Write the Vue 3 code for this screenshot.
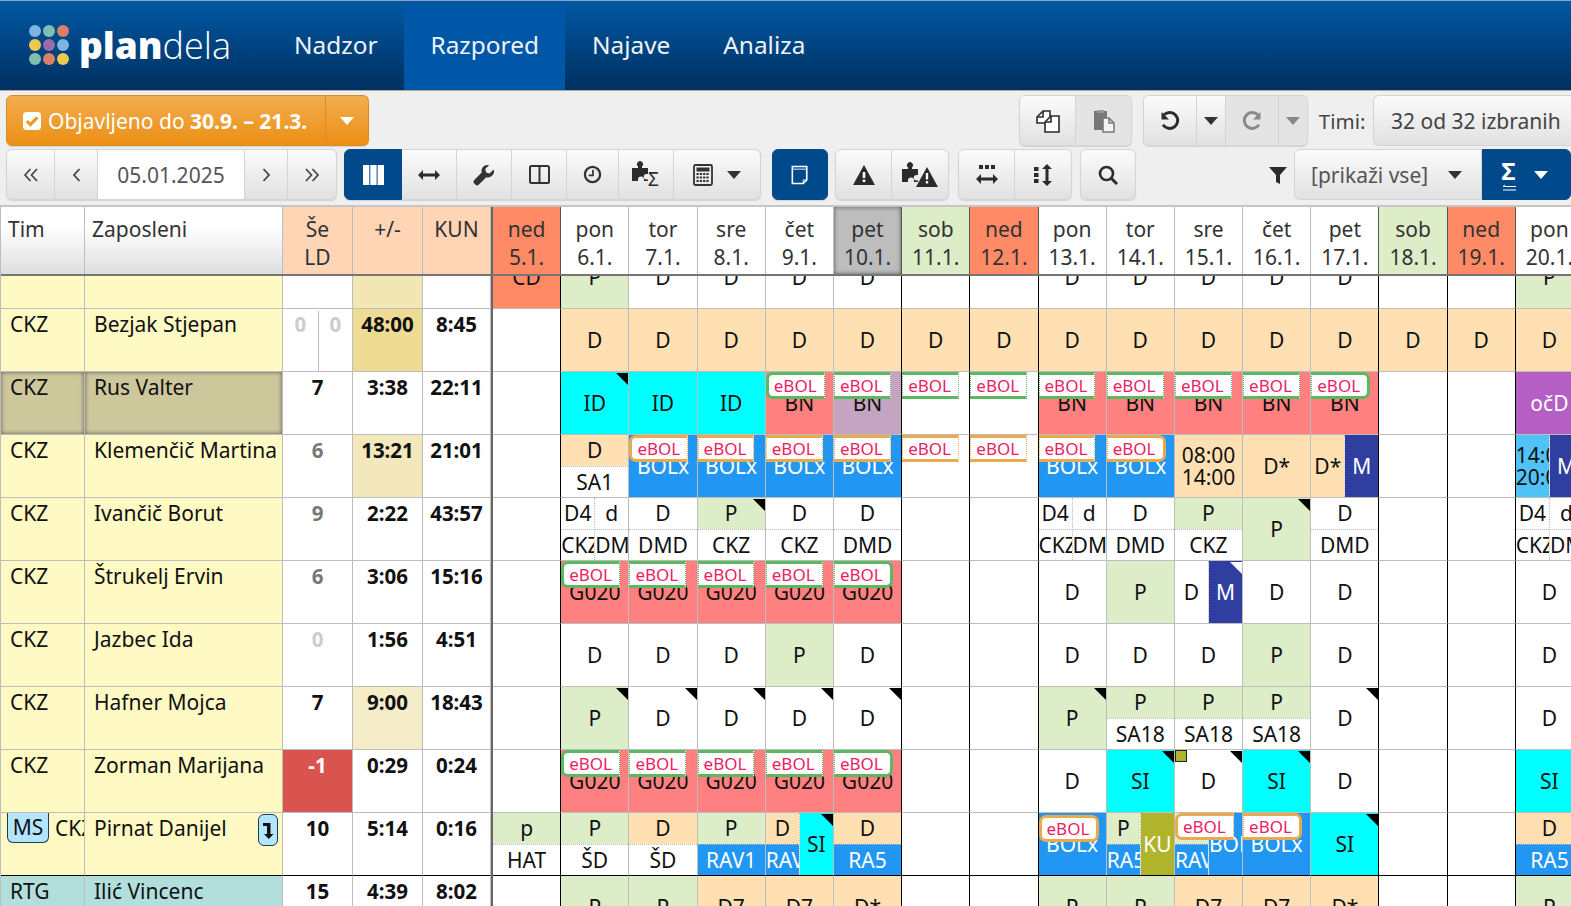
<template>
  <div class="app">
    <header class="topbar">
      <div class="logo">
        <svg width="42" height="42" viewBox="0 0 42 42">
          <circle v-for="d in logoDots" :key="d.x + '-' + d.y" :cx="d.x" :cy="d.y" r="6" :fill="d.c" />
        </svg>
        <span class="logo-text"><b>plan</b><i>dela</i></span>
      </div>
      <nav class="nav">
        <a v-for="n in navItems" :key="n" class="nav-item" :class="{ active: n === 'Razpored' }">{{ n }}</a>
      </nav>
    </header>

    <section class="toolbar">
      <div class="tb-row">
        <div class="btn-group">
          <button class="btn orange publish">
            <svg class="check" width="20" height="20" viewBox="0 0 20 20">
              <rect x="1" y="1" width="18" height="18" rx="3.5" fill="#fff" />
              <path d="M4.8 10.2l3.6 3.4 7-7.2" fill="none" stroke="#ec961f" stroke-width="3" />
            </svg>
            Objavljeno do&nbsp;<b>30.9. – 21.3.</b>
          </button>
          <button class="btn orange publish-caret"><span class="caret white"></span></button>
        </div>
        <div class="spacer"></div>
        <div class="btn-group">
          <button class="btn w57">
            <svg width="24" height="24" viewBox="0 0 24 24" fill="#fff" stroke="#2b2b2b" stroke-width="1.6">
              <path d="M1 8l6-6h7v12H1z" />
              <path d="M1 8h6V2" fill="none" />
              <path d="M15 7h8v16H9V13z" />
              <path d="M9 13h6V7" fill="none" />
            </svg>
          </button>
          <button class="btn w56 off">
            <svg width="24" height="24" viewBox="0 0 24 24">
              <rect x="2" y="2" width="13" height="19" fill="#777" />
              <rect x="5" y="1" width="7" height="3" fill="#999" />
              <path d="M11 9h6l5 5v9H11z" fill="#f4f4f4" stroke="#777" stroke-width="1.5" />
              <path d="M17 9v5h5" fill="none" stroke="#777" stroke-width="1.5" />
            </svg>
          </button>
        </div>
        <div class="btn-group ml11">
          <button class="btn w54">
            <svg width="22" height="22" viewBox="0 0 22 22" fill="none" stroke="#2b2b2b" stroke-width="3">
              <path d="M5 4.8a8 8 0 1 1-1 10" />
              <path d="M2.5 2v7.5H10" fill="#2b2b2b" stroke="none" />
            </svg>
          </button>
          <button class="btn w29"><span class="caret"></span></button>
          <button class="btn w53 off">
            <svg width="22" height="22" viewBox="0 0 22 22" fill="none" stroke="#888" stroke-width="3">
              <path d="M17 4.8a8 8 0 1 0 1 10" />
              <path d="M19.5 2v7.5H12" fill="#888" stroke="none" />
            </svg>
          </button>
          <button class="btn w29 off"><span class="caret grey"></span></button>
        </div>
        <span class="tb-label">Timi:</span>
        <button class="btn teams">32 od 32 izbranih</button>
      </div>

      <div class="tb-row">
        <div class="btn-group">
          <button class="btn w49">
            <svg width="16" height="14" viewBox="0 0 16 14" fill="none" stroke="#444" stroke-width="1.7">
              <path d="M7.500 1L2 7l5.500 6M14 1L8.500 7l5.500 6" />
            </svg>
          </button>
          <button class="btn w43">
            <svg width="9" height="14" viewBox="0 0 9 14" fill="none" stroke="#444" stroke-width="1.8"><path d="M7.500 1L2 7l5.500 6" /></svg>
          </button>
          <div class="date">05.01.2025</div>
          <button class="btn w43">
            <svg width="9" height="14" viewBox="0 0 9 14" fill="none" stroke="#444" stroke-width="1.8"><path d="M1.500 1L7 7l-5.500 6" /></svg>
          </button>
          <button class="btn w49">
            <svg width="16" height="14" viewBox="0 0 16 14" fill="none" stroke="#444" stroke-width="1.7">
              <path d="M2 1l5.500 6L2 13M8.500 1L14 7l-5.500 6" />
            </svg>
          </button>
        </div>

        <div class="btn-group ml7">
          <button class="btn blue w58">
            <svg width="21" height="20" viewBox="0 0 21 20" fill="#fff">
              <rect width="6.300" height="20" /><rect x="7.300" width="6.300" height="20" /><rect x="14.600" width="6.400" height="20" />
            </svg>
          </button>
          <button class="btn w55">
            <svg width="22" height="12" viewBox="0 0 22 12" fill="#2b2b2b">
              <path d="M0 6l5-5v3.500h12V1l5 5-5 5V7.500H5V11z" />
            </svg>
          </button>
          <button class="btn w55">
            <svg width="22" height="22" viewBox="0 0 22 22" fill="#333">
              <path d="M14.500 1a6 6 0 0 0-5.800 7.600L1.300 16a2.600 2.600 0 0 0 0 3.600l1 1a2.600 2.600 0 0 0 3.600 0l7.400-7.400A6 6 0 0 0 21 7l-.4-1.600-4 4-3.400-1-1-3.400 4-4z" />
            </svg>
          </button>
          <button class="btn w55">
            <svg width="21" height="19" viewBox="0 0 21 19" fill="none" stroke="#333" stroke-width="2">
              <rect x="1" y="1" width="19" height="17" rx="1.500" /><path d="M10.500 1v17" />
            </svg>
          </button>
          <button class="btn w52">
            <svg width="19" height="19" viewBox="0 0 20 20" fill="none" stroke="#333" stroke-width="2.400">
              <circle cx="10" cy="10" r="8" /><path d="M10.500 5v6H6" stroke-width="1.800" />
            </svg>
          </button>
          <button class="btn w55">
            <svg width="28" height="27" viewBox="0 0 28 27">
              <path d="M0 7h6V5.500a3 3 0 1 1 4 0V7h6v6h-1.500a2.700 2.700 0 0 0 0 5.500H16V20h-4v-1.500a3 3 0 0 0-6 0V20H0z" fill="#2b2b2b" />
              <text x="16" y="25" class="sigma-small">Σ</text>
            </svg>
          </button>
          <button class="btn w87">
            <svg width="20" height="22" viewBox="0 0 20 22">
              <rect x="1" y="1" width="18" height="20" rx="1.500" fill="none" stroke="#333" stroke-width="1.800" />
              <rect x="3.500" y="3.500" width="13" height="4" fill="#333" />
              <path d="M3.500 10h13M3.500 13.500h13M3.500 17h13" stroke="#333" stroke-width="2" stroke-dasharray="2.200 1.100" />
            </svg>
            <span class="caret ml14"></span>
          </button>
        </div>

        <button class="btn blue w56 solo ml11">
          <svg width="18" height="20" viewBox="0 0 20 22" fill="none" stroke="#fff" stroke-width="1.800">
            <path d="M1.500 1.500h16v15l-4 4h-12z" />
            <path d="M1.500 4.500h16M17.500 16.500h-4v4" stroke-width="1" />
          </svg>
        </button>

        <div class="btn-group ml7">
          <button class="btn w57">
            <svg width="22" height="20" viewBox="0 0 22 20">
              <path d="M11 0l11 20H0z" fill="#2b2b2b" />
              <rect x="9.700" y="7" width="2.600" height="6" fill="#fff" />
              <rect x="9.700" y="14.500" width="2.600" height="2.600" fill="#fff" />
            </svg>
          </button>
          <button class="btn w57">
            <svg width="36" height="26" viewBox="0 0 36 26">
              <path d="M0 7h6V5.500a3 3 0 1 1 4 0V7h6v6h-1.500a2.700 2.700 0 0 0 0 5.500H16V20h-4v-1.500a3 3 0 0 0-6 0V20H0z" fill="#2b2b2b" />
              <path d="M25 5l11 20H14z" fill="#2b2b2b" />
              <rect x="23.800" y="11" width="2.400" height="6.500" fill="#fff" />
              <rect x="23.800" y="19" width="2.400" height="2.500" fill="#fff" />
            </svg>
          </button>
        </div>

        <div class="btn-group ml9">
          <button class="btn w57">
            <svg width="22" height="20" viewBox="0 0 22 20" fill="#2b2b2b">
              <rect x="3" y="0" width="4" height="4" /><rect x="9" y="0" width="4" height="4" /><rect x="15" y="0" width="4" height="4" />
              <path d="M0 14l5-5v3.500h12V9l5 5-5 5v-3.500H5V19z" />
            </svg>
          </button>
          <button class="btn w57">
            <svg width="18" height="22" viewBox="0 0 18 22" fill="#2b2b2b">
              <rect x="0" y="3" width="4.500" height="4" /><rect x="0" y="9" width="4.500" height="4" /><rect x="0" y="15" width="4.500" height="4" />
              <path d="M13 0l5 5h-3.500v12H18l-5 5-5-5h3.500V5H8z" />
            </svg>
          </button>
        </div>

        <button class="btn w56 solo ml8">
          <svg width="20" height="20" viewBox="0 0 20 20" fill="none" stroke="#2b2b2b" stroke-width="2.600">
            <circle cx="8.500" cy="8.500" r="6.500" /><path d="M13 13l6 6" stroke-width="3" />
          </svg>
        </button>

        <div class="spacer"></div>
        <svg class="funnel" width="18" height="18" viewBox="0 0 18 18"><path d="M0 1h18l-7 8v9l-4-2V9z" fill="#2b2b2b" /></svg>
        <button class="btn select">[prikaži vse]<span class="caret"></span></button>
        <button class="btn blue sigma">
          <span class="sigma-icon">Σ<svg width="14" height="7" viewBox="0 0 14 7" fill="none" stroke="#fff" stroke-width="1"><path d="M3 1L1 2.500h13M1 6h13" /></svg></span>
          <span class="caret white"></span>
        </button>
      </div>
    </section>

    <section class="table">
      <div class="grid-row head">
        <div class="hcell plain">Tim</div>
        <div class="hcell plain name-head">Zaposleni</div>
        <div class="hcell stat-head">Še<br />LD</div>
        <div class="hcell stat-head">+/-</div>
        <div class="hcell stat-head">KUN</div>
        <div class="bar"></div>
        <div
          v-for="(d, i) in days"
          :key="d.date"
          class="hcell day-head"
          :class="[d.kind, { edge: isEdge(i) }]"
        >{{ d.name }}<br />{{ d.date }}</div>
      </div>

      <div class="body">
        <div class="rows">
          <div v-for="(r, ri) in rows" :key="ri" class="grid-row row" :class="{ 'team-end': r.teamEnd }">
            <div class="cell team" :class="r.tone">
              <span v-if="r.badge" class="ms">{{ r.badge }}</span>{{ r.team }}
            </div>
            <div class="cell name" :class="r.tone">
              {{ r.name }}
              <span v-if="r.badge" class="swap">
                <svg width="12" height="18" viewBox="0 0 12 18"><path d="M1 2h7.500v11H11.500L6.800 18 2 13h3V5H1z" fill="#111" /></svg>
              </span>
            </div>
            <div class="cell stat" :class="[r.leftTone]">
              <template v-if="r.left2">
                <span class="half grey-0">{{ r.left }}</span><span class="half grey-0 div">{{ r.left2 }}</span>
              </template>
              <template v-else>{{ r.left }}</template>
            </div>
            <div class="cell stat" :class="r.diffTone">{{ r.diff }}</div>
            <div class="cell stat">{{ r.kun }}</div>
            <div class="bar"></div>
            <div v-for="(c, ci) in r.cells" :key="ci" class="day" :class="{ edge: isEdge(ci) }">
              <div
                v-for="(p, pi) in c.parts"
                :key="pi"
                class="part"
                :class="{ divided: pi > 0 }"
              >
                <div class="slot" :class="p.bg">
                  <span class="txt" :class="{ two: p.t.includes('\n') }">{{ p.t }}</span>
                </div>
                <div v-if="p.sub" class="slot lower" :class="p.subBg"><span class="txt">{{ p.sub }}</span></div>
                <span v-if="p.flag" class="flag" :class="p.flag"></span>
              </div>
              <span v-if="c.ebol" class="ebol" :class="[c.ebol, c.round]">eBOL</span>
              <span v-if="c.square" class="square"></span>
            </div>
          </div>
        </div>
      </div>
    </section>
  </div>
</template>

<script setup>
const navItems = ['Nadzor', 'Razpored', 'Najave', 'Analiza']

const dotColors = ['#7fb4e2', '#7fbfb4', '#dc7f68', '#edc84e', '#9a6da6', '#7fb4e2', '#7fbfb4', '#dc7f68', '#edc84e']
const logoDots = dotColors.map((c, i) => ({ c, x: 7 + (i % 3) * 14, y: 7 + Math.floor(i / 3) * 14 }))

const days = [
  ['ned', '5.1.', 'sun'], ['pon', '6.1.'], ['tor', '7.1.'], ['sre', '8.1.'], ['čet', '9.1.'], ['pet', '10.1.', 'today'],
  ['sob', '11.1.', 'sat'], ['ned', '12.1.', 'sun'], ['pon', '13.1.'], ['tor', '14.1.'], ['sre', '15.1.'], ['čet', '16.1.'],
  ['pet', '17.1.'], ['sob', '18.1.', 'sat'], ['ned', '19.1.', 'sun'], ['pon', '20.1.'],
].map(([name, date, kind]) => ({ name, date, kind: kind || '' }))

// black separators around the weekends
const edges = [0, 5, 6, 7, 12, 13, 14]
function isEdge(i) { return edges.includes(i) }

function part(t, bg = '', o = {}) { return { t, bg, ...o } }
function c(t, bg = '', o = {}) {
  return { parts: [part(t, bg, o)], ebol: o.ebol, round: o.round, square: o.square }
}
function split(a, b, o = {}) { return { parts: [a, b], ...o } }

const _ = { parts: [part('')] }
const d = c('D')
const dFlag = c('D', '', { flag: 'dark' })
const pg = c('P', 'green')
const pFlag = c('P', 'green', { flag: 'dark' })
const siFlag = c('SI', 'cyan', { flag: 'dark' })
const od = c('D', 'orange')
const oneD = (sub) => c('D', '', { sub })
const greenSub = (sub, subBg = '') => c('P', 'green', { sub, subBg })
const orangeSub = (sub, subBg = '') => c('D', 'orange', { sub, subBg })
const ckzSplit = split(part('D4', '', { sub: 'CKZ' }), part('d', '', { sub: 'DMD' }))

const bn = (o = {}) => c('BN', 'red', { ebol: 'g', ...o })
const bolx = (o = {}) => c('BOLx', 'blue', { ebol: 'o', ...o })
const g020 = (o = {}) => c('G020', 'red', { ebol: 'g', ...o })

const rows = [
  { team: '', name: '', tone: 'yellow', left: '', diff: '', diffTone: 'd1', kun: '',
    cells: [c('CD', 'coral'), pg, d, d, d, d, _, _, d, d, d, d, d, _, _, pg] },
  { team: 'CKZ', name: 'Bezjak Stjepan', tone: 'yellow', left: '0', left2: '0', diff: '48:00', diffTone: 'd2', kun: '8:45',
    cells: [_, od, od, od, od, od, od, od, od, od, od, od, od, od, od, od] },
  { team: 'CKZ', name: 'Rus Valter', tone: 'picked', left: '7', diff: '3:38', kun: '22:11',
    cells: [_, c('ID', 'cyan', { flag: 'dark' }), c('ID', 'cyan'), c('ID', 'cyan'), bn({ round: 'rl' }), c('BN', 'plum', { ebol: 'g' }),
      c('', '', { ebol: 'g' }), c('', '', { ebol: 'g' }), bn(), bn(), bn(), bn(), bn({ round: 'rr' }), _, _, c('očD', 'purple')] },
  { team: 'CKZ', name: 'Klemenčič Martina', tone: 'yellow', left: '6', leftTone: 'muted', diff: '13:21', diffTone: 'd3', kun: '21:01',
    cells: [_, orangeSub('SA1'), bolx({ round: 'rl' }), bolx(), bolx(), bolx(), c('', '', { ebol: 'o' }), c('', '', { ebol: 'o' }),
      bolx(), bolx({ round: 'rr' }), c('08:00\n14:00', 'orange'), c('D*', 'orange'),
      split(part('D*', 'orange'), part('M', 'navy')), _, _, split(part('14:00\n20:00', 'sky'), part('M', 'navy'))] },
  { team: 'CKZ', name: 'Ivančič Borut', tone: 'yellow', left: '9', leftTone: 'muted', diff: '2:22', kun: '43:57',
    cells: [_, ckzSplit, oneD('DMD'), c('P', 'green', { sub: 'CKZ', flag: 'dark' }), oneD('CKZ'), oneD('DMD'), _, _,
      ckzSplit, oneD('DMD'), greenSub('CKZ'), pFlag, oneD('DMD'), _, _, ckzSplit] },
  { team: 'CKZ', name: 'Štrukelj Ervin', tone: 'yellow', left: '6', leftTone: 'muted', diff: '3:06', kun: '15:16',
    cells: [_, g020({ round: 'rl' }), g020(), g020(), g020(), g020({ round: 'rr' }), _, _, d, pg,
      split(part('D'), part('M', 'navy', { flag: 'light' })), d, d, _, _, d] },
  { team: 'CKZ', name: 'Jazbec Ida', tone: 'yellow', left: '0', leftTone: 'faint', diff: '1:56', kun: '4:51',
    cells: [_, d, d, d, pg, d, _, _, d, d, d, pg, d, _, _, d] },
  { team: 'CKZ', name: 'Hafner Mojca', tone: 'yellow', left: '7', diff: '9:00', diffTone: 'd4', kun: '18:43',
    cells: [_, pFlag, dFlag, dFlag, dFlag, dFlag, _, _, pFlag, greenSub('SA18'), greenSub('SA18'), greenSub('SA18'), dFlag, _, _, d] },
  { team: 'CKZ', name: 'Zorman Marijana', tone: 'yellow', left: '-1', leftTone: 'alert', diff: '0:29', kun: '0:24',
    cells: [_, g020({ round: 'rl' }), g020(), g020(), g020(), g020({ round: 'rr' }), _, _, d, siFlag,
      c('D', '', { flag: 'dark', square: true }), siFlag, d, _, _, c('SI', 'cyan')] },
  { team: 'CKZ', badge: 'MS', name: 'Pirnat Danijel', tone: 'yellow', left: '10', diff: '5:14', kun: '0:16', teamEnd: true,
    cells: [c('p', 'green', { sub: 'HAT' }), greenSub('ŠD'), orangeSub('ŠD'), greenSub('RAV1', 'blue'),
      split(part('D', 'orange', { sub: 'RAV', subBg: 'blue' }), part('SI', 'cyan', { flag: 'dark' })), orangeSub('RA5', 'blue'), _, _,
      bolx({ round: 'both' }),
      split(part('P', 'green', { sub: 'RA5', subBg: 'blue' }), part('KU', 'olive')),
      split(part('P', 'green', { sub: 'RAV', subBg: 'blue' }), part('BOLx', 'blue'), { ebol: 'o', round: 'rl' }),
      bolx({ round: 'rr' }), siFlag, _, _, orangeSub('RA5', 'blue')] },
  { team: 'RTG', name: 'Ilić Vincenc', tone: 'teal', left: '15', diff: '4:39', kun: '8:02',
    cells: [_, pg, pg, c('D7', 'orange'), c('D7', 'orange'), c('D*', 'orange'), _, _, pg, pg, c('D7', 'orange'), c('D7', 'orange'), c('D*', 'orange'), _, _, pg] },
]
</script>

<style>
html, body { margin: 0; overflow: hidden; background: #fff; }
</style>

<style scoped>
.app {
  width: 100vw; height: 100vh; overflow: hidden;
  font-family: "Noto Sans", sans-serif; font-size: 21px; color: #111;
}
button { font-family: inherit; }

.topbar {
  height: 90px; box-sizing: border-box; display: flex;
  background: linear-gradient(#0058a4, #00305f);
  border-top: 1px solid #8fa3b8;
}
.logo { width: 267px; display: flex; align-items: center; padding-left: 28px; box-sizing: border-box; gap: 9px; margin-top: -2px; }
.logo-text { color: #fff; font-family: "Open Sans", sans-serif; font-size: 37px; line-height: 1; }
.logo-text b { font-weight: 800; }
.logo-text i { font-style: normal; font-weight: 300; font-size: 36px; }
.nav { display: flex; padding-left: 0.5px; }
.nav-item {
  display: flex; align-items: center; padding: 0 26.500px 2px;
  color: #eef3f8; font-size: 24.400px; box-sizing: border-box;
}
.nav-item.active { background: #0057a7; }

.toolbar {
  height: 115px; box-sizing: border-box; padding: 4px 3px 5px 6px;
  background: #efefef; border-top: 1px solid #aaa;
  display: flex; flex-direction: column; gap: 3px;
}
.tb-row { display: flex; align-items: stretch; height: 51px; margin-right: -3px; }
.spacer { flex: 1; }
.btn-group { display: flex; border-radius: 6px; box-shadow: 0 1px 1px rgba(0, 0, 0, 0.12); }
.btn {
  display: flex; align-items: center; justify-content: center; flex: none;
  box-sizing: border-box; padding: 0; margin: 0;
  background: linear-gradient(#fbfbfb, #e1e1e1);
  border: 1px solid #d4d4d4; color: #444; font-size: 21px;
}
.btn-group > .btn:not(:first-child), .btn-group > .date { border-left: 0; }
.btn-group .btn:first-child { border-radius: 6px 0 0 6px; }
.btn-group .btn:last-child { border-radius: 0 6px 6px 0; }
.solo { border-radius: 6px; box-shadow: 0 1px 1px rgba(0, 0, 0, 0.12); }
.off { background: #e4e4e4; }
.btn.blue { background: #004a8c; border-color: #004a8c; }
.btn.orange { background: linear-gradient(#f2ad50, #ec8f15); border-color: #dd8d22; color: #fff; }

.publish { width: 320px; justify-content: flex-start; padding-left: 15px; font-size: 21px; color: #fff; white-space: nowrap; }
.check { margin-right: 6px; flex: none; }
.publish-caret { width: 43px; }
.caret { width: 0; height: 0; border: 7px solid transparent; border-top: 8px solid #333; border-bottom: 0; display: inline-block; }
.caret.white { border-top-color: #fff; }
.caret.grey { border-top-color: #888; }

.w29 { width: 29px; } .w43 { width: 43px; } .w49 { width: 49px; } .w52 { width: 52px; }
.w53 { width: 53px; } .w54 { width: 54px; } .w55 { width: 55px; } .w56 { width: 56px; }
.w57 { width: 57px; } .w58 { width: 58px; } .w87 { width: 87px; }
.ml7 { margin-left: 7px; } .ml8 { margin-left: 8px; } .ml9 { margin-left: 9px; }
.ml11 { margin-left: 11px; } .ml14 { margin-left: 14px; }
.btn.ml11 { margin-left: 11px; } .btn.ml8 { margin-left: 8px; }

.tb-label { align-self: center; margin: 0 7.500px 0 10.500px; color: #444; font-size: 20.500px; }
.teams { flex: 0 0 198px; border-right: 0; border-radius: 6px 0 0 6px; justify-content: flex-start; padding-left: 17px; white-space: nowrap; }
.date {
  width: 147px; box-sizing: border-box; display: flex; align-items: center; justify-content: center;
  background: #fff; border: 1px solid #d4d4d4; color: #555; font-size: 21px;
}
.sigma-small { font-size: 19px; fill: #2b2b2b; font-family: "Noto Sans", sans-serif; }
.funnel { align-self: center; margin-right: 7px; }
.select {
  width: 188px; border-radius: 6px 0 0 6px; justify-content: flex-start; gap: 20px;
  padding-left: 16px; color: #555; white-space: nowrap;
}
.sigma { width: 89px; border-radius: 0 6px 6px 0; gap: 18px; padding-right: 4px; }
.sigma-icon { display: flex; flex-direction: column; align-items: center; color: #fff; font-size: 24px; font-weight: 700; line-height: 26px; }

.table { border-top: 2px solid #c6c6c6; border-left: 1px solid #bdbdbd; }
.grid-row {
  display: grid;
  grid-template-columns: 84px 198px 70px 70px 68px 2px repeat(16, 68.200px);
}
.head { height: 69px; border-bottom: 2px solid #757575; box-sizing: border-box; position: relative; z-index: 1; }
.hcell {
  box-sizing: border-box; padding-top: 8px; line-height: 28px; color: #333;
  border-right: 1px solid #bdbdbd; text-align: center; overflow: hidden; white-space: nowrap;
}
.plain { text-align: left; padding-left: 7px; background: linear-gradient(#fff 30%, #dedede); }
.stat-head { background: #ffd5b6; }
.day-head { background: #fff; }
.day-head.sat { background: #dcedc8; }
.day-head.sun { background: #ff8a65; }
.day-head.today { background: #bdbdbd; box-shadow: inset 0 0 4px #555; }
.bar { background: #666; }

.body { height: 630px; overflow: hidden; }
.rows { margin-top: -30px; }
.row { height: 63px; }
.cell {
  box-sizing: border-box; padding: 2px 2px 0 9px; line-height: 26px;
  border-right: 1px solid #bdbdbd; border-bottom: 1px solid #bdbdbd;
  white-space: nowrap; overflow: hidden; position: relative;
}
.yellow { background: #fff9c4; }
.teal { background: #b2dfdb; }
.picked { background: #cdc79c; box-shadow: inset 0 0 4px #555; }
.ms {
  display: inline-block; box-sizing: border-box; height: 30px; width: 42px; text-align: center; line-height: 29px;
  margin: -2px 6px 0 -3px; vertical-align: top;
  background: #b3e5fc; border: 1px solid #1c3b57; border-top: 0; border-radius: 0 0 6px 6px; color: #111;
}
.swap {
  position: absolute; top: 1px; right: 4px; width: 20px; height: 32px; box-sizing: border-box;
  display: flex; align-items: center; justify-content: center;
  background: #b3e5fc; border: 1px solid #1c3b57; border-radius: 6px;
}
.stat { padding: 2px 0 0; text-align: center; font-weight: 700; font-size: 20.500px; display: block; }
.half { display: inline-block; width: 50%; box-sizing: border-box; height: 100%; }
.half.div { border-left: 1px solid #bdbdbd; }
.stat:has(.half) { display: flex; }
.grey-0 { color: #ccc; }
.muted { color: #777; }
.faint { color: #ccc; }
.alert { background: #d9534f; color: #fff; }
.d1 { background: #f2e6b4; }
.d2 { background: #eedb94; }
.d3 { background: #f3e8bb; }
.d4 { background: #f5ecc8; }

.day {
  position: relative; display: flex; box-sizing: border-box; min-width: 0;
  border-right: 1px solid #bdbdbd; border-bottom: 1px solid #bdbdbd;
}
.edge { border-right-color: #000; }
.day-head.edge { border-right-color: #555; }
.row.team-end > .cell, .row.team-end > .day { border-bottom-color: #000; }
.part { flex: 1 1 0; min-width: 0; display: flex; flex-direction: column; position: relative; }
.part.divided { border-left: 1px dotted #bdbdbd; }
.slot {
  flex: 1 1 0; min-height: 0; display: flex; flex-direction: column; justify-content: center; overflow: hidden;
}
.slot.lower { border-top: 1px dotted #bdbdbd; }
.txt { display: block; text-align: center; white-space: pre; line-height: 26px; }
.txt.two { line-height: 22px; }
.green { background: #dcedc8; }
.orange { background: #ffe0b2; }
.cyan { background: #00ffff; }
.red { background: #ff8080; }
.plum { background: #c4a4c0; }
.coral { background: #ff8a65; }
.sky { background: #4fc3f7; }
.blue { background: #2196f3; color: #fff; }
.navy { background: #303f9f; color: #fff; }
.olive { background: #afb42b; color: #fff; }
.purple { background: #b55fc4; color: #fff; }

.flag { position: absolute; top: 1px; right: 0; width: 0; height: 0; border-left: 12px solid transparent; border-top: 12px solid #000; }
.flag.light { border-top-color: #fff; }
.ebol {
  position: absolute; top: 0; left: 0; height: 27px; box-sizing: border-box; padding: 0 7px 0 5px;
  background: #fff; color: #e91e63; font-size: 17px; line-height: 21px;
  border-style: solid; border-width: 3px 1px;
  z-index: 1;
}
.ebol.g { border-color: #5cb860; border-left-style: dotted; border-right-style: dotted; border-left-width: 1px; border-right-width: 1px; }
.ebol.o { border-color: #eba94e; border-left-style: dotted; border-right-style: dotted; border-left-width: 1px; border-right-width: 1px; }
.ebol.rl { border-left: 3px solid; border-radius: 7px 0 0 7px; left: 0; }
.ebol.rr { border-right: 3px solid; border-radius: 0 7px 7px 0; }
.ebol.both { border-left: 3px solid; border-right: 3px solid; border-radius: 7px; left: 0; top: 2px; }
.ebol.g.rl, .ebol.g.rr, .ebol.g.both { border-left-color: #5cb860; border-right-color: #5cb860; }
.ebol.o.rl, .ebol.o.rr, .ebol.o.both { border-left-color: #eba94e; border-right-color: #eba94e; }
.square { position: absolute; top: 0; left: 0; width: 12px; height: 12px; box-sizing: border-box; background: #afb42b; border: 1px solid #222; }
</style>
